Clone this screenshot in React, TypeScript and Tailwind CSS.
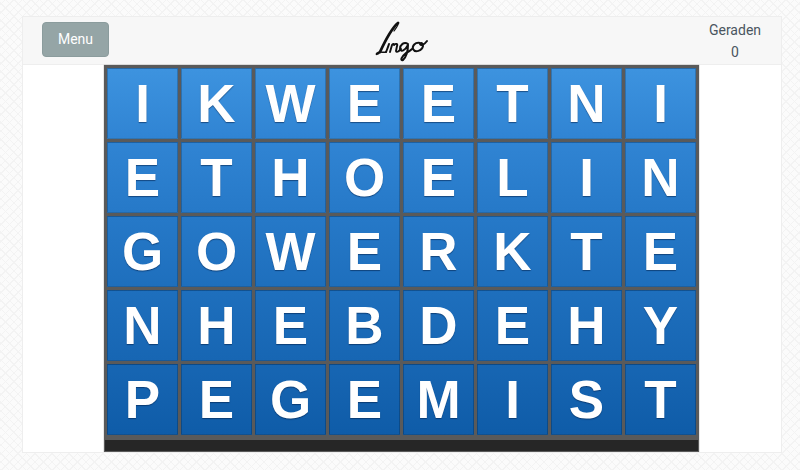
import React from 'react';

const rows = ['IKWEETNI', 'ETHOELIN', 'GOWERKTE', 'NHEBDEHY', 'PEGEMIST'];

const rowColors = [
  'from-[#3d93df] to-[#3084d3]',
  'from-[#3084d3] to-[#2679c8]',
  'from-[#2679c8] to-[#1e6fbd]',
  'from-[#1e6fbd] to-[#1766b3]',
  'from-[#1766b3] to-[#0f5ca8]',
];

const Logo: React.FC = () => (
  <svg width="54" height="42" viewBox="0 0 54 42" fill="none" stroke="#111" strokeLinecap="round" strokeLinejoin="round">
    {/* L */}
    <path d="M23 3 C17 8 11 19 5 32" strokeWidth="2.8" />
    <path d="M23 3 C24 5 21 8 19 11" strokeWidth="1.2" />
    <path d="M5 32 C3 35 0 35 2 33 C5 31 8 33 11 32" strokeWidth="1.5" />
    {/* i n */}
    <path d="M11 32 C12 30 13 27 14 24" strokeWidth="2" />
    <path d="M15 32 L17 25 C18 23 19 24 19 25 C21 23 23 24 22 26 L21 31 C22 33 24 31 26 29" strokeWidth="1.9" />
    {/* g */}
    <path d="M33 24 C29 21 25 25 25 29 C26 32 30 31 33 25 C33 31 32 36 28 40 C25 41 26 37 31 33 C33 32 35 31 37 29" strokeWidth="2" />
    {/* o */}
    <path d="M45 23 C40 22 37 26 38 29 C40 33 47 31 48 26 C48 23 46 22 45 24 C46 26 49 25 52 21" strokeWidth="2" />
  </svg>
);

const App: React.FC = () => {
  return (
    <div className="min-h-[470px] bg-[#fbfbfb] bg-[repeating-linear-gradient(45deg,#f3f3f3_0,#f3f3f3_1px,transparent_1px,transparent_6px),repeating-linear-gradient(-45deg,#f3f3f3_0,#f3f3f3_1px,transparent_1px,transparent_6px)] pt-[16px] px-[22px] pb-[17px] font-['Roboto',sans-serif]">
      <div className="h-[437px] w-[760px] bg-white border border-[#eeeeee] flex flex-col overflow-hidden">
        {/* Top bar */}
        <div className="h-[48px] shrink-0 bg-[#f7f7f7] border-b border-[#eeeeee] flex items-center justify-between px-[19px]">
          <button className="h-[35px] w-[67px] mb-[2px] rounded-[4px] bg-[#95a5a6] border border-[#8b9c9d] text-white text-[14px]">
            Menu
          </button>
          <div className="mr-[13px]">
            <Logo />
          </div>
          <div className="w-[54px] text-center text-[14px] leading-[22px] text-[#4a5560]">
            <div>Geraden</div>
            <div>0</div>
          </div>
        </div>

        {/* Board */}
        <div className="w-[595px] ml-[81px] flex-1 bg-[#5a5a5a] shadow-[0_0_1px_#777777] flex flex-col justify-between">
          <div className="grid grid-cols-8 gap-[3px] px-[3px] pt-[3px] font-['Liberation_Sans',sans-serif]">
            {rows.map((row, r) =>
              row.split('').map((letter, c) => (
                <div
                  key={`${r}-${c}`}
                  className={`h-[71px] bg-gradient-to-b ${rowColors[r]} border border-black/20 flex items-center justify-center text-white font-bold text-[53px] leading-none [text-shadow:0_1px_1px_rgba(0,30,70,0.55)]`}
                >
                  {letter}
                </div>
              )),
            )}
          </div>
          <div className="h-[11px] mx-[1px] mb-[1px] bg-[#262626]" />
        </div>
      </div>
    </div>
  );
};

export default App;
